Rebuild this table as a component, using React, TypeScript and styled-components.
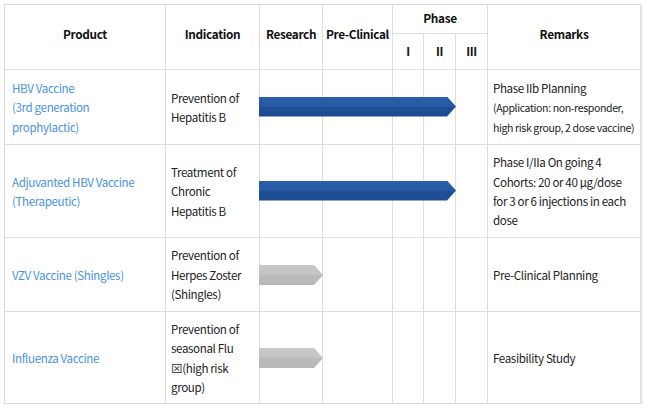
import React from "react";
import styled, { createGlobalStyle } from "styled-components";

const Global = createGlobalStyle`
  html, body { margin: 0; padding: 0; background: #ffffff; }
  body { font-family: "Noto Sans CJK KR", "Noto Sans", sans-serif; }
`;

const Page = styled.div`
  padding: 4px 0 0 4px;
`;

const Table = styled.div`
  display: grid;
  grid-template-columns: 161px 94px 63px 70px 31px 32px 32px 153px;
  grid-template-rows: 29px 36px 75px 93px 74px 92px;
  width: 637px;
  box-sizing: border-box;
  border-top: 1px solid #d9d9d9;
  border-left: 1px solid #d9d9d9;
  box-shadow: 1px 1px 2px rgba(0, 0, 0, 0.12);
  color: #222;
`;

const Cell = styled.div<{ $col: string; $row: string; $center?: boolean; $pad?: number }>`
  grid-column: ${(p) => p.$col};
  grid-row: ${(p) => p.$row};
  box-sizing: border-box;
  border-right: 1px solid #dedede;
  border-bottom: 1px solid #dedede;
  display: flex;
  flex-direction: column;
  justify-content: center;
  align-items: ${(p) => (p.$center ? "center" : "flex-start")};
  text-align: ${(p) => (p.$center ? "center" : "left")};
  padding: 2px 0 0 ${(p) => p.$pad ?? 0}px;
  font-size: 11.6px;
  letter-spacing: -0.38px;
  line-height: 19.4px;
  white-space: nowrap;
`;

const Head = styled(Cell)`
  font-weight: 700;
  font-size: 11.8px;
  letter-spacing: -0.35px;
  color: #111;
  padding: 0 0 6px 0;
`;

const SubHead = styled(Cell)`
  font-weight: 700;
  font-size: 11.8px;
  letter-spacing: -0.35px;
  color: #111;
  padding: 0 0 2px 0;
`;

const ProductName = styled.span`
  color: #4893e4;
`;

const Small = styled.span`
  font-size: 10.6px;
  letter-spacing: -0.4px;
`;

const Arrow = styled.div<{ $col: string; $row: string; $tone: "blue" | "gray"; $width: number }>`
  grid-column: ${(p) => p.$col};
  grid-row: ${(p) => p.$row};
  align-self: center;
  justify-self: start;
  margin-left: -1px;
  margin-top: ${(p) => (p.$tone === "blue" ? -2 : 0)}px;
  width: ${(p) => p.$width}px;
  height: 20px;
  z-index: 2;
  clip-path: polygon(0 0, calc(100% - 9px) 0, 100% 50%, calc(100% - 9px) 100%, 0 100%);
  background: ${(p) =>
    p.$tone === "blue"
      ? "linear-gradient(to bottom, #2b5ea9 0%, #2759a4 48%, #1f4f95 52%, #1d4b90 100%)"
      : "linear-gradient(to bottom, #c8c8c8 0%, #c3c3c3 48%, #bbbbbb 52%, #b8b8b8 100%)"};
`;

type Row = {
  product: React.ReactNode;
  indication: React.ReactNode;
  remarks: React.ReactNode;
  arrow: { tone: "blue" | "gray"; col: string; width: number };
};

const rows: Row[] = [
  {
    product: (
      <>
        HBV Vaccine
        <br />
        (3rd generation
        <br />
        prophylactic)
      </>
    ),
    indication: (
      <>
        Prevention of
        <br />
        Hepatitis B
      </>
    ),
    remarks: (
      <>
        <span>Phase IIb Planning</span>
        <Small>(Application: non-responder,</Small>
        <Small>high risk group, 2 dose vaccine)</Small>
      </>
    ),
    arrow: { tone: "blue", col: "3 / 7", width: 197 },
  },
  {
    product: (
      <>
        Adjuvanted HBV Vaccine
        <br />
        (Therapeutic)
      </>
    ),
    indication: (
      <>
        Treatment of
        <br />
        Chronic
        <br />
        Hepatitis B
      </>
    ),
    remarks: (
      <>
        Phase I/IIa On going 4
        <br />
        Cohorts: 20 or 40 μg/dose
        <br />
        for 3 or 6 injections in each
        <br />
        dose
      </>
    ),
    arrow: { tone: "blue", col: "3 / 7", width: 197 },
  },
  {
    product: <>VZV Vaccine (Shingles)</>,
    indication: (
      <>
        Prevention of
        <br />
        Herpes Zoster
        <br />
        (Shingles)
      </>
    ),
    remarks: <>Pre-Clinical Planning</>,
    arrow: { tone: "gray", col: "3 / 4", width: 64 },
  },
  {
    product: <>Influenza Vaccine</>,
    indication: (
      <>
        Prevention of
        <br />
        seasonal Flu
        <br />
        ⊠(high risk
        <br />
        group)
      </>
    ),
    remarks: <>Feasibility Study</>,
    arrow: { tone: "gray", col: "3 / 4", width: 64 },
  },
];

export default function App() {
  return (
    <Page>
      <Global />
      <Table>
        <Head $col="1" $row="1 / 3" $center>Product</Head>
        <Head $col="2" $row="1 / 3" $center>Indication</Head>
        <Head $col="3" $row="1 / 3" $center>Research</Head>
        <Head $col="4" $row="1 / 3" $center>Pre-Clinical</Head>
        <SubHead $col="5 / 8" $row="1" $center>Phase</SubHead>
        <SubHead $col="5" $row="2" $center>I</SubHead>
        <SubHead $col="6" $row="2" $center>II</SubHead>
        <SubHead $col="7" $row="2" $center>III</SubHead>
        <Head $col="8" $row="1 / 3" $center>Remarks</Head>
        {rows.map((r, i) => {
          const row = String(i + 3);
          return (
            <React.Fragment key={i}>
              <Cell $col="1" $row={row} $pad={7}>
                <ProductName>{r.product}</ProductName>
              </Cell>
              <Cell $col="2" $row={row} $pad={5}>
                <span>{r.indication}</span>
              </Cell>
              <Cell $col="3" $row={row} />
              <Cell $col="4" $row={row} />
              <Cell $col="5" $row={row} />
              <Cell $col="6" $row={row} />
              <Cell $col="7" $row={row} />
              <Cell $col="8" $row={row} $pad={5}>
                {r.remarks}
              </Cell>
              <Arrow $col={r.arrow.col} $row={row} $tone={r.arrow.tone} $width={r.arrow.width} />
            </React.Fragment>
          );
        })}
      </Table>
    </Page>
  );
}
